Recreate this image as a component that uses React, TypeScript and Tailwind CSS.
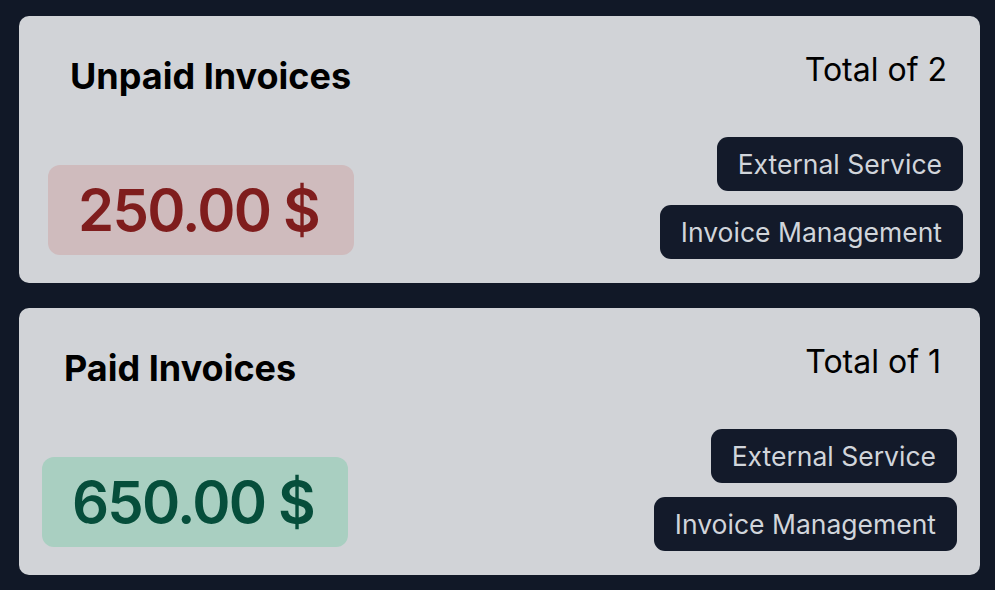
const tags = ["External Service", "Invoice Management"];

type CardProps = {
    title: string;
    count: number;
    amount: string;
    paid: boolean;
    shell: string;
};

function InvoiceCard({ title, count, amount, paid, shell }: CardProps) {
    return (
        <div className={`flex h-[267px] flex-col rounded-[10px] bg-[#d1d3d7] ${shell}`}>
            <div className="flex items-start justify-between pl-[22px] pr-[16px] pt-[35px]">
                <h2 className="mt-[5px] text-[36px] leading-[40px] font-bold text-black">{title}</h2>
                <span className="text-[32px] leading-[38px] text-black">Total of {count}</span>
            </div>
            <div className="mt-auto flex items-end justify-between pb-6">
                <div
                    className={`mb-1 w-[306px] rounded-[12px] py-[16px] pl-[30px] text-[58px] leading-[58px] font-semibold tracking-[-0.03em] ${
                        paid ? "bg-[#a9cfc1] text-[#064e3b]" : "bg-[#cfbbbd] text-[#7f1d1d]"
                    }`}
                >
                    {amount}
                </div>
                <div className="flex flex-col items-end gap-[14px]">
                    {tags.map(t => (
                        <span key={t} className="rounded-[11px] bg-[#131a2a] px-[21px] py-[11px] text-[26.5px] leading-[32px] text-[#d1d5db]">
                            {t}
                        </span>
                    ))}
                </div>
            </div>
        </div>
    );
}

export default function App() {
    return (
        <div className="flex min-h-screen flex-col gap-[25px] bg-[#111827] pl-[19px] pr-[15px] pt-4" style={{ fontFamily: "Inter, 'Noto Sans', sans-serif" }}>
            <InvoiceCard title="Unpaid Invoices" count={2} amount="250.00 $" paid={false} shell="pl-[29px] pr-[17px]" />
            <InvoiceCard title="Paid Invoices" count={1} amount="650.00 $" paid={true} shell="px-[23px]" />
        </div>
    );
}
